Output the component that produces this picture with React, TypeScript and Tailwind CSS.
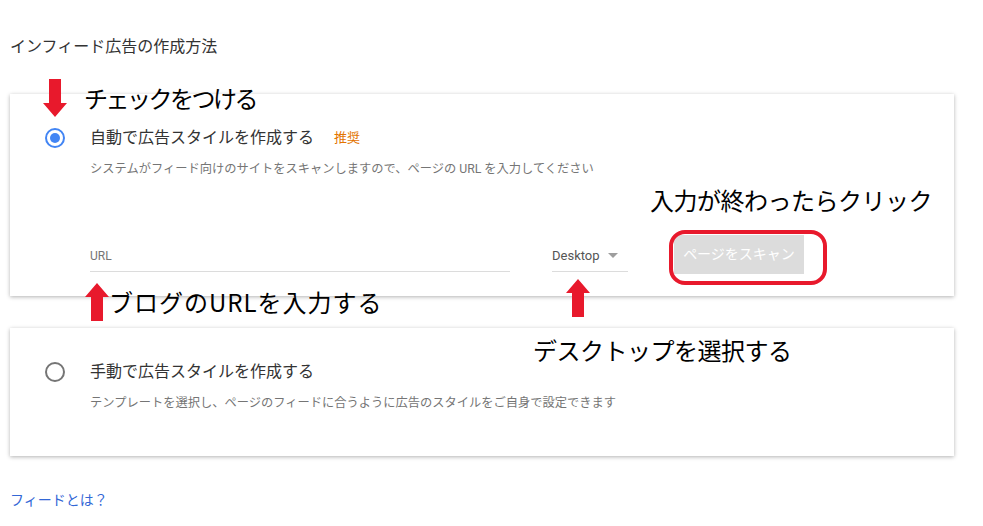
const ui = "font-['Roboto','Noto_Sans_CJK_JP',sans-serif]";
const note = "font-['Noto_Sans_CJK_JP',sans-serif]";

function Radio({ checked }: { checked?: boolean }) {
  return (
    <span
      className={`flex h-[20px] w-[20px] shrink-0 items-center justify-center rounded-full border-2 ${
        checked ? "border-[#4285f4]" : "border-[#757575]"
      }`}
    >
      {checked && <span className="h-[10px] w-[10px] rounded-full bg-[#4285f4]" />}
    </span>
  );
}

// red block arrow used for the annotations
function Arrow({ down }: { down?: boolean }) {
  return (
    <svg width="24" height="38" viewBox="0 0 24 38" className={down ? "rotate-180" : ""}>
      <path d="M12 0 L24 14 L18 14 L18 38 L6 38 L6 14 L0 14 Z" fill="#e8192c" />
    </svg>
  );
}

export default function App() {
  return (
    <div className={`relative h-[526px] w-[983px] overflow-hidden bg-white ${ui}`}>
      <div className="px-[10px] pt-[36px]">
        <h1 className="text-[16px] leading-[22px] text-[#333]">インフィード広告の作成方法</h1>

        {/* auto */}
        <div className="mt-[36px] h-[202px] w-[944px] bg-white pl-[35px] pt-[32px] shadow-[0_1px_4px_rgba(0,0,0,0.3)]">
          <div className="flex h-[24px] items-center">
            <Radio checked />
            <span className="ml-[25px] text-[16px] text-[#333]">自動で広告スタイルを作成する</span>
            <span className="ml-[20px] text-[13px] text-[#e37400]">推奨</span>
          </div>
          <p className="ml-[45px] mt-[10px] text-[12.25px] leading-[18px] text-[#757575]">
            システムがフィード向けのサイトをスキャンしますので、ページの URL を入力してください
          </p>
          <div className="ml-[45px] mt-[61px] flex items-start">
            <div className="h-[33px] w-[420px] border-b border-[#dcdcdc] pt-[8px] text-[12px] text-[#757575]">URL</div>
            <div className="ml-[42px] flex h-[33px] w-[76px] items-start border-b border-[#dcdcdc] pt-[7px] text-[13px] text-[#555]">
              Desktop
              <span className="ml-[8px] mt-[7px] h-0 w-0 border-x-[5px] border-t-[5px] border-x-transparent border-t-[#9e9e9e]" />
            </div>
            <div className="ml-[46px] -mt-[4px] flex h-[39px] w-[130px] items-center justify-center bg-[#dcdcdc] text-[14px] text-white">
              ページをスキャン
            </div>
          </div>
        </div>

        {/* manual */}
        <div className="mt-[32px] h-[128px] w-[944px] bg-white pl-[35px] pt-[32px] shadow-[0_1px_4px_rgba(0,0,0,0.3)]">
          <div className="flex h-[24px] items-center">
            <Radio />
            <span className="ml-[25px] text-[16px] text-[#333]">手動で広告スタイルを作成する</span>
          </div>
          <p className="ml-[45px] mt-[10px] text-[12.25px] leading-[18px] text-[#757575]">
            テンプレートを選択し、ページのフィードに合うように広告のスタイルをご自身で設定できます
          </p>
        </div>

        <a className="mt-[34px] block text-[14px] leading-[20px] text-[#3367d6]">フィードとは？</a>
      </div>

      {/* annotations */}
      <div className="absolute left-[43px] top-[79px]">
        <Arrow down />
      </div>
      <div className={`absolute left-[84px] top-[82px] text-[24px] leading-[32px] tracking-[-2.5px] text-black ${note}`}>チェックをつける</div>

      <div className={`absolute left-[650px] top-[184px] text-[24px] leading-[32px] tracking-[-0.5px] text-black ${note}`}>入力が終わったらクリック</div>
      <div className="absolute left-[669px] top-[230px] h-[55px] w-[158px] rounded-[16px] border-[4px] border-solid border-[#e8192c]" />

      <div className="absolute left-[85px] top-[283px]">
        <Arrow />
      </div>
      <div className={`absolute left-[109px] top-[286px] text-[24px] leading-[32px] tracking-[1px] text-black ${note}`}>ブログのURLを入力する</div>

      <div className="absolute left-[566px] top-[279px]">
        <Arrow />
      </div>
      <div className={`absolute left-[533px] top-[334px] text-[24px] leading-[32px] tracking-[-0.5px] text-black ${note}`}>デスクトップを選択する</div>
    </div>
  );
}
